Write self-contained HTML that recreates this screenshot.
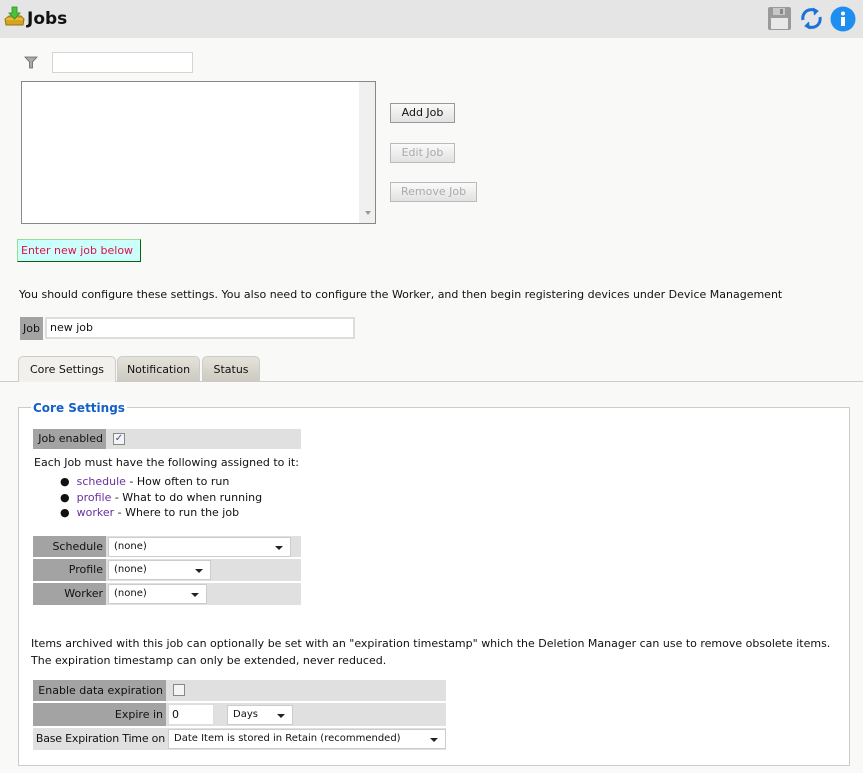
<!DOCTYPE html>
<html><head><meta charset="utf-8"><style>
*{box-sizing:border-box;margin:0;padding:0}
body{width:863px;height:773px;background:#f9f9f7;font-family:"DejaVu Sans","Liberation Sans",sans-serif;font-size:11px;color:#111;position:relative;overflow:hidden}
.a{position:absolute;white-space:nowrap}
.hdr{left:0;top:0;width:863px;height:38px;background:#e5e5e5}
.btn{position:absolute;height:20px;border:1px solid #999;background:linear-gradient(#fafafa,#e2e2e2);font-size:11px;text-align:center;line-height:18px}
.dis{color:#aaa;border-color:#bbb}
.lbl{position:absolute;background:#a3a3a3;text-align:right;padding-right:3px;font-size:11px;white-space:nowrap}
.row{position:absolute;background:#e0e0e0}
.sel{position:absolute;background:#fff;border:1px solid #ccc;font-size:10px;padding-left:5px;line-height:18px;white-space:nowrap}
.sel:after{content:"";position:absolute;right:7px;top:8px;border:4px solid transparent;border-top:4px solid #222;border-bottom:0}
.tab{position:absolute;top:356px;height:25px;border:1px solid #ccc;border-bottom:none;border-radius:5px 5px 0 0;background:linear-gradient(#e4e2da,#cdcbc0);text-align:center;line-height:25px;font-size:11px}
a{color:#6a2fa0;text-decoration:none}
</style></head><body>
<div class="a hdr"></div>
<svg class="a" style="left:3px;top:6px" width="22" height="22" viewBox="0 0 22 22"><path d="M2 13 L6 10 L18 10 L21 13 L20 19 L3 19Z" fill="#d4a420" stroke="#9a7410"/><path d="M3 13 L20 13" stroke="#f3d060"/><path d="M9 1h5v6h3l-5.5 6L6 7h3z" fill="#4bc23a" stroke="#2a8a20" stroke-width=".8"/></svg>
<div class="a" style="left:27px;top:9px;font-size:17px;font-weight:bold">Jobs</div>
<svg class="a" style="left:767px;top:6px" width="25" height="25" viewBox="0 0 25 25"><rect x="1" y="1" width="23" height="23" rx="2" fill="#9a9a9a"/><rect x="6" y="2" width="12" height="7" fill="#c8c8c8"/><rect x="13" y="3" width="3" height="5" fill="#888"/><rect x="4" y="12" width="17" height="11" fill="#e8e8e8"/></svg>
<svg class="a" style="left:799px;top:6px" width="25" height="25" viewBox="0 0 25 25" fill="none" stroke="#1a73d8" stroke-width="3"><path d="M4 14 A8.5 8.5 0 0 1 17 5"/><path d="M21 11 A8.5 8.5 0 0 1 8 20"/><path d="M14 2l5 3-4 4" fill="#1a73d8" stroke-width="1"/><path d="M11 23l-5-3 4-4" fill="#1a73d8" stroke-width="1"/></svg>
<svg class="a" style="left:830px;top:6px" width="26" height="26" viewBox="0 0 26 26"><circle cx="13" cy="13" r="12.5" fill="#1e8ff0"/><circle cx="13" cy="7.5" r="2" fill="#fff"/><rect x="11" y="11" width="4" height="9" fill="#fff"/></svg>
<svg class="a" style="left:24px;top:55px" width="14" height="14" viewBox="0 0 14 14"><path d="M1 2h12l-4.5 5v6h-3V7z" fill="#aaa" stroke="#666" stroke-width=".8"/></svg>
<div class="a" style="left:52px;top:52px;width:141px;height:21px;background:#fff;border:1px solid #d4d4d4"></div>
<div class="a" style="left:21px;top:81px;width:355px;height:143px;background:#fff;border:1px solid #888"><div style="position:absolute;right:0;top:0;width:16px;height:141px;background:#f0f0f0"></div><div style="position:absolute;right:4px;bottom:5px;border:3px solid transparent;border-top:4px solid #999"></div></div>
<div class="btn" style="left:390px;top:103px;width:65px">Add Job</div>
<div class="btn dis" style="left:390px;top:143px;width:65px">Edit Job</div>
<div class="btn dis" style="left:390px;top:182px;width:87px">Remove Job</div>
<div class="a" style="left:17px;top:239px;width:124px;height:23px;background:#ccfffc;border:1px solid #0a6010;border-top-color:#9d9;border-left-color:#9d9;color:#e0104a;line-height:22px;padding-left:3px">Enter new job below</div>
<div class="a" style="left:19px;top:288px">You should configure these settings. You also need to configure the Worker, and then begin registering devices under Device Management</div>
<div class="lbl" style="left:20px;top:317px;width:23px;height:23px;line-height:23px;text-align:center;padding:0">Job</div>
<div class="a" style="left:45px;top:317px;width:310px;height:22px;background:#fff;border:2px solid #ddd;padding-left:3px;line-height:18px">new job</div>
<div class="a" style="left:0;top:381px;width:863px;border-top:1px solid #ccc"></div>
<div class="tab" style="left:18px;width:98px;background:#f1f0ec;height:26px">Core Settings</div>
<div class="tab" style="left:117px;width:83px">Notification</div>
<div class="tab" style="left:202px;width:58px">Status</div>
<div class="a" style="left:18px;top:407px;width:832px;height:359px;border:1px solid #ccc;background:#fff"></div>
<div class="a" style="left:31px;top:401px;background:#fff;padding:0 2px;color:#1560c8;font-weight:bold;font-size:12px">Core Settings</div>
<div class="row" style="left:33px;top:429px;width:268px;height:20px"></div>
<div class="lbl" style="left:33px;top:429px;width:73px;height:20px;line-height:20px">Job enabled</div>
<div class="a" style="left:113px;top:433px;width:12px;height:12px;border:1px solid #888;background:#f4f4f4;color:#3050a0;font-size:10px;line-height:10px;text-align:center">✓</div>
<div class="a" style="left:34px;top:456px">Each Job must have the following assigned to it:</div>
<div class="a" style="left:60px;top:474px;line-height:15.5px">●&nbsp; <a>schedule</a> - How often to run<br>●&nbsp; <a>profile</a> - What to do when running<br>●&nbsp; <a>worker</a> - Where to run the job</div>
<div class="row" style="left:33px;top:536px;width:268px;height:21px"></div>
<div class="row" style="left:33px;top:559px;width:268px;height:22px"></div>
<div class="row" style="left:33px;top:583px;width:268px;height:22px"></div>
<div class="lbl" style="left:33px;top:536px;width:73px;height:21px;line-height:21px">Schedule</div>
<div class="lbl" style="left:33px;top:559px;width:73px;height:22px;line-height:22px">Profile</div>
<div class="lbl" style="left:33px;top:583px;width:73px;height:22px;line-height:22px">Worker</div>
<div class="sel" style="left:108px;top:537px;width:183px;height:20px">(none)</div>
<div class="sel" style="left:108px;top:560px;width:103px;height:20px">(none)</div>
<div class="sel" style="left:108px;top:584px;width:99px;height:20px">(none)</div>
<div class="a" style="left:31px;top:635px;line-height:17px">Items archived with this job can optionally be set with an "expiration timestamp" which the Deletion Manager can use to remove obsolete items.<br>The expiration timestamp can only be extended, never reduced.</div>
<div class="row" style="left:33px;top:680px;width:413px;height:21px"></div>
<div class="row" style="left:33px;top:703px;width:413px;height:23px"></div>
<div class="row" style="left:33px;top:728px;width:413px;height:22px"></div>
<div class="lbl" style="left:33px;top:680px;width:133px;height:21px;line-height:21px">Enable data expiration</div>
<div class="lbl" style="left:33px;top:703px;width:133px;height:23px;line-height:23px">Expire in</div>
<div class="lbl" style="left:33px;top:728px;width:133px;height:22px;line-height:22px;background:#e0e0e0;padding-right:1px;letter-spacing:-0.2px">Base Expiration Time on</div>
<div class="a" style="left:173px;top:684px;width:12px;height:12px;border:1px solid #888;background:#f4f4f4"></div>
<div class="a" style="left:168px;top:704px;width:46px;height:21px;background:#fff;border:1px solid #ddd;padding-left:3px;line-height:19px">0</div>
<div class="sel" style="left:227px;top:705px;width:66px;height:20px">Days</div>
<div class="sel" style="left:168px;top:729px;width:278px;height:20px">Date Item is stored in Retain (recommended)</div>
</body></html>
